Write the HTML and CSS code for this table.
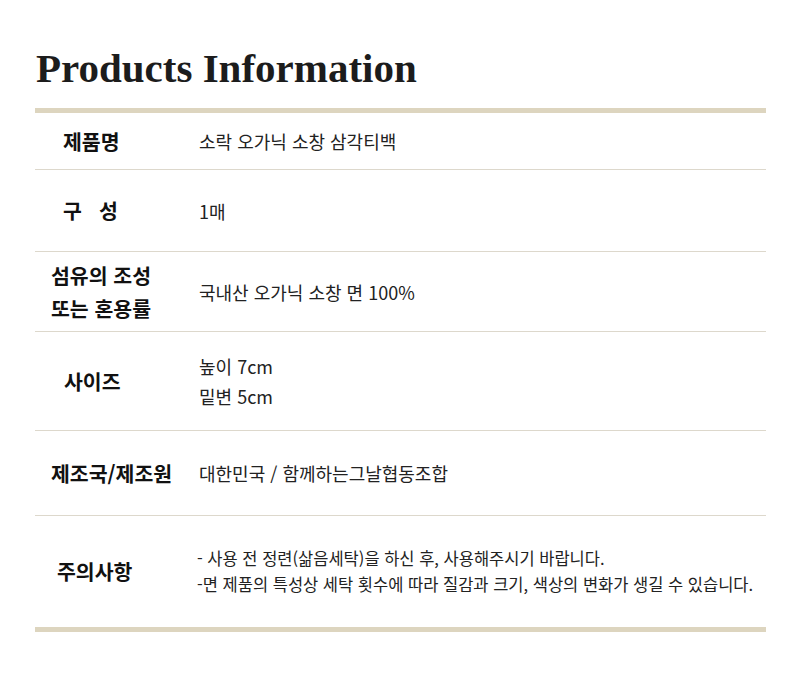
FILE: index.html
```html
<!DOCTYPE html>
<html lang="ko">
<head>
<meta charset="utf-8">
<title>Products Information</title>
<link rel="stylesheet" href="styles.css">
</head>
<body>
<div class="page">
  <h1 class="title">Products Information</h1>
  <div class="table">
    <div class="row row-name">
      <div class="label lbl-name">제품명</div>
      <div class="value">소락 오가닉 소창 삼각티백</div>
    </div>
    <div class="row row-comp">
      <div class="label lbl-comp">구&nbsp;&nbsp;&nbsp;성</div>
      <div class="value">1매</div>
    </div>
    <div class="row row-fiber">
      <div class="label lbl-fiber">섬유의 조성<br>또는 혼용률</div>
      <div class="value">국내산 오가닉 소창 면 100%</div>
    </div>
    <div class="row row-size">
      <div class="label lbl-size">사이즈</div>
      <div class="value">높이 7cm<br>밑변 5cm</div>
    </div>
    <div class="row row-origin">
      <div class="label lbl-origin">제조국/제조원</div>
      <div class="value">대한민국 / 함께하는그날협동조합</div>
    </div>
    <div class="row row-note">
      <div class="label lbl-note">주의사항</div>
      <div class="value notes">- 사용 전 정련(삶음세탁)을 하신 후, 사용해주시기 바랍니다.<br>-면 제품의 특성상 세탁 횟수에 따라 질감과 크기, 색상의 변화가 생길 수 있습니다.</div>
    </div>
  </div>
</div>
</body>
</html>
```

FILE: styles.css
```css
* { box-sizing: border-box; }
html, body { margin: 0; padding: 0; background: #fff; }
body {
  font-family: "Noto Sans CJK KR", "Noto Sans", sans-serif;
  color: #1a1a1a;
}
.page {
  width: 731px;
  margin-left: 35px;
  padding-top: 43px;
}
.title {
  margin: 0 0 0 1px;
  font-family: "Liberation Serif", "DejaVu Serif", serif;
  font-weight: bold;
  font-size: 41px;
  line-height: 50px;
  color: #1c1c1c;
  height: 65px;
}
.table {
  border-top: 5px solid #ddd5bf;
  border-bottom: 5px solid #ddd5bf;
}
.row {
  display: flex;
  align-items: center;
  border-bottom: 1px solid #ddd8cc;
}
.row:last-child { border-bottom: none; }
.row-name { height: 57px; }
.row-comp { height: 82px; }
.row-fiber { height: 80px; }
.row-size { height: 99px; }
.row-origin { height: 85px; }
.row-note { height: 111px; }

.label {
  width: 164px;
  flex: none;
  font-weight: bold;
  font-size: 20.5px;
  line-height: 33px;
  color: #111;
}
.lbl-name { padding-left: 28px; }
.lbl-comp { padding-left: 28px; }
.lbl-fiber { padding-left: 16px; }
.lbl-size { padding-left: 29px; }
.lbl-origin { padding-left: 16px; }
.lbl-note { padding-left: 22px; }

.value {
  font-size: 18px;
  line-height: 30px;
  color: #222;
}
.notes {
  font-size: 16.5px;
  line-height: 26px;
  margin-left: -2px;
  margin-top: -2px;
}
```
